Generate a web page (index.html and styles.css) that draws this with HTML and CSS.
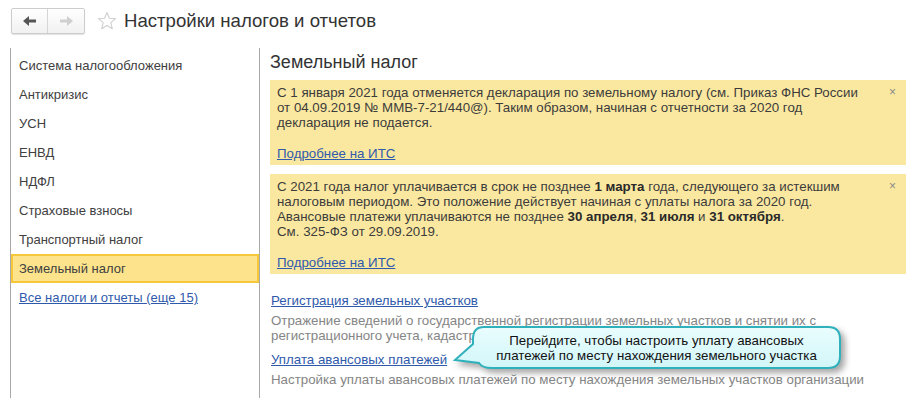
FILE: index.html
```html
<!DOCTYPE html>
<html lang="ru">
<head>
  <meta charset="UTF-8" />
  <title>Настройки налогов и отчетов</title>
  <link rel="stylesheet" href="styles.css">
</head>
<body>

<header class="topbar">
  <div class="nav-group">
    <button class="nav-btn back" title="Назад">
      <svg width="14" height="10" viewBox="0 0 14 10"><path d="M0 5 L6 0 V3.5 H13 V6.5 H6 V10 Z" fill="#555"/></svg>
    </button>
    <button class="nav-btn forward" title="Вперед">
      <svg width="14" height="10" viewBox="0 0 14 10"><path d="M14 5 L8 0 V3.5 H1 V6.5 H8 V10 Z" fill="#cfcfcf"/></svg>
    </button>
  </div>
  <svg class="star" width="20" height="20" viewBox="0 0 20 20">
    <path d="M10 1.5 L12.4 7.3 L18.6 7.7 L13.8 11.7 L15.3 17.8 L10 14.5 L4.7 17.8 L6.2 11.7 L1.4 7.7 L7.6 7.3 Z" fill="none" stroke="#cfcfcf" stroke-width="1.1" stroke-linejoin="round"/>
  </svg>
  <h1>Настройки налогов и отчетов</h1>
</header>

<div class="layout">
  <aside class="sections">
    <ul>
      <li>Система налогообложения</li>
      <li>Антикризис</li>
      <li>УСН</li>
      <li>ЕНВД</li>
      <li>НДФЛ</li>
      <li>Страховые взносы</li>
      <li>Транспортный налог</li>
      <li class="active">Земельный налог</li>
      <li><a href="#">Все налоги и отчеты (еще 15)</a></li>
    </ul>
  </aside>

  <main class="content">
    <h2>Земельный налог</h2>

    <div class="notice">
      <span class="close">×</span>
      <p>С 1 января 2021 года отменяется декларация по земельному налогу (см. Приказ ФНС России от 04.09.2019 № ММВ-7-21/440@). Таким образом, начиная с отчетности за 2020 год декларация не подается.</p>
      <a href="#">Подробнее на ИТС</a>
    </div>

    <div class="notice">
      <span class="close">×</span>
      <p>С 2021 года налог уплачивается в срок не позднее <b>1 марта</b> года, следующего за истекшим налоговым периодом. Это положение действует начиная с уплаты налога за 2020 год.<br>
      Авансовые платежи уплачиваются не позднее <b>30 апреля</b>, <b>31 июля</b> и <b>31 октября</b>.<br>
      См. 325-ФЗ от 29.09.2019.</p>
      <a href="#">Подробнее на ИТС</a>
    </div>

    <div class="setting">
      <a href="#">Регистрация земельных участков</a>
      <p>Отражение сведений о государственной регистрации земельных участков и снятии их с регистрационного учета, кадастровой стоимости и налоговых льготах</p>
    </div>

    <div class="setting">
      <a href="#">Уплата авансовых платежей</a>
      <p>Настройка уплаты авансовых платежей по месту нахождения земельных участков организации</p>
    </div>
  </main>
</div>

<div class="hint">
  <svg class="hint-bubble" width="400" height="56" viewBox="0 0 400 56">
    <defs>
      <linearGradient id="hintFill" x1="0" y1="0" x2="0" y2="1">
        <stop offset="0" stop-color="#e9fdfe"/>
        <stop offset="1" stop-color="#d2f6f9"/>
      </linearGradient>
    </defs>
    <path d="M34 5 H378 Q390 5 390 17 V34 Q390 46 378 46 H42 Q32 46 29 41 L5 38 L23 22 V17 Q23 5 34 5 Z" fill="url(#hintFill)" stroke="#2fb1bb" stroke-width="2"/>
  </svg>
  <div class="hint-text">Перейдите, чтобы настроить уплату авансовых<br>платежей по месту нахождения земельного участка</div>
</div>

</body>
</html>
```

FILE: styles.css
```css
:root {
  --text: #3c3c3c;
  --muted: #858585;
  --link: #2f5aab;
  --line: #a8a8a8;
  --notice: #fbe8a0;
  --active: #fde48c;
  --active-border: #f5c73a;
}

html, body {
  margin: 0;
  height: 100%;
  font-family: 'Liberation Sans', Arial, sans-serif;
  font-size: 13.3px;
  color: var(--text);
  background: white;
}

a {
  color: var(--link);
  text-decoration: underline;
}

/* top bar */
.topbar {
  height: 48px;
  box-sizing: border-box;
  padding: 8px 0 0 11px;
  display: flex;
  align-items: flex-start;
}

.nav-group {
  display: flex;
  height: 24px;
  border: 1px solid #cdcdcd;
  border-radius: 2px;
  box-shadow: 0 1px 1px rgba(0,0,0,0.12);
  background: linear-gradient(#ffffff, #f1f1f1);
}

.nav-btn {
  width: 36px;
  height: 24px;
  padding: 0;
  border: none;
  background: none;
  display: flex;
  align-items: center;
  justify-content: center;
}

.nav-btn.back {
  border-right: 1px solid #d6d6d6;
}

.star {
  margin: 3px 0 0 12px;
}

h1 {
  margin: 0 0 0 7px;
  font-size: 18.6px;
  font-weight: normal;
  line-height: 26px;
  color: #333;
}

/* layout */
.layout {
  display: flex;
  margin-left: 10px;
  height: calc(100% - 48px);
}

.sections {
  width: 248px;
  border-left: 1px solid var(--line);
  border-right: 1px solid var(--line);
}

.sections ul {
  list-style: none;
  margin: 0;
  padding: 3px 0 0;
}

.sections li {
  height: 29px;
  line-height: 29px;
  padding-left: 8px;
  box-sizing: border-box;
  color: #404040;
  font-size: 13px;
}

.sections li.active {
  background: var(--active);
  border: 2px solid var(--active-border);
  line-height: 25px;
  padding-left: 6px;
}

.content {
  flex: 1;
  padding: 4px 13px 0 10px;
}

h2 {
  margin: 0 0 8px;
  font-size: 18px;
  font-weight: normal;
  line-height: 20px;
  color: #333;
}

.notice {
  position: relative;
  background: var(--notice);
  padding: 5px 44px 4px 7px;
  margin-bottom: 9px;
  line-height: 15px;
}

.notice p {
  margin: 0;
}

.notice b {
  color: #2a2a2a;
}

.notice a {
  display: inline-block;
  margin-top: 16px;
}

.close {
  position: absolute;
  top: 5px;
  right: 10px;
  color: #8a8a8a;
  font-size: 12px;
}

.setting {
  padding-left: 1px;
  line-height: 15px;
}

.notice + .setting {
  margin-top: 19px;
}

.setting p {
  margin: 5px 0 9px;
  color: var(--muted);
}

/* hint bubble over the list */
.hint {
  position: absolute;
  left: 450px;
  top: 322px;
  width: 400px;
  height: 56px;
}

.hint-bubble {
  position: absolute;
  left: 0;
  top: 0;
  filter: drop-shadow(4px 4px 3px rgba(0,0,0,0.35));
}

.hint-text {
  position: absolute;
  left: 23px;
  top: 11px;
  width: 367px;
  text-align: center;
  color: #111;
  line-height: 15px;
}
```
